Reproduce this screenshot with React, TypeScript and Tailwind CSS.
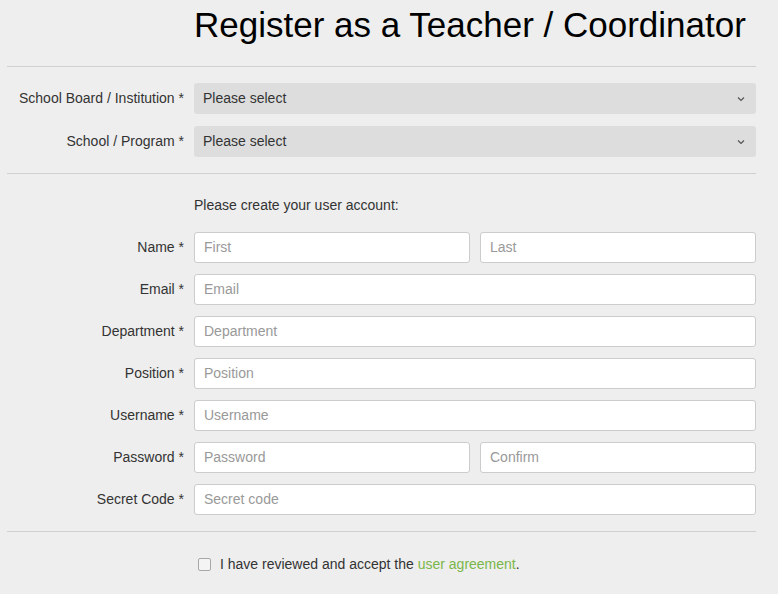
const selects = ["School Board / Institution *", "School / Program *"];

const Chevron = () => (
  <svg
    className="absolute right-[11px] top-1/2 -translate-y-1/2"
    width="8"
    height="5"
    viewBox="0 0 8 5"
    fill="none"
  >
    <path d="M1 1l3 3 3-3" stroke="#555" strokeWidth="1.2" />
  </svg>
);

const TextInput = ({ placeholder }: { placeholder: string }) => (
  <input
    type="text"
    placeholder={placeholder}
    className="h-[31px] w-full min-w-0 rounded-[3px] border border-[#cccccc] bg-white px-[9px] pb-px text-[14px] text-[#333] outline-none placeholder:text-[#999]"
  />
);

const Row = ({ label, children }: { label: string; children: React.ReactNode }) => (
  <div className="flex items-center">
    <label className="w-[177px] shrink-0 text-right text-[14px] text-[#333]">{label}</label>
    <div className="ml-[10px] flex flex-1 gap-[10px]">{children}</div>
  </div>
);

const App = () => {
  return (
    <div
      className="min-h-[594px] w-full bg-[#eeeeee]"
      style={{ fontFamily: '"Liberation Sans", Arial, sans-serif' }}
    >
      <div className="ml-[7px] w-[749px]">
        <h1 className="h-[66px] pl-[187px] pt-[7px] text-[35px] leading-[35px] text-black">
          Register as a Teacher / Coordinator
        </h1>
        <div className="h-px bg-[#d0d0d0]"></div>

        <div className="flex flex-col gap-[12px] py-[16px]">
          {selects.map((label) => (
            <Row key={label} label={label}>
              <div className="relative w-full">
                <div className="flex h-[31px] items-center rounded-[3px] bg-[#dddddd] px-[9px] text-[14px] text-[#333]">
                  Please select
                </div>
                <Chevron />
              </div>
            </Row>
          ))}
        </div>
        <div className="h-px bg-[#d0d0d0]"></div>

        <p className="ml-[187px] mt-[21px] text-[14px] leading-[20px] text-[#333]">
          Please create your user account:
        </p>

        <div className="mt-[17px] flex flex-col gap-[11px] pb-[16px]">
          <Row label="Name *">
            <TextInput placeholder="First" />
            <TextInput placeholder="Last" />
          </Row>
          <Row label="Email *">
            <TextInput placeholder="Email" />
          </Row>
          <Row label="Department *">
            <TextInput placeholder="Department" />
          </Row>
          <Row label="Position *">
            <TextInput placeholder="Position" />
          </Row>
          <Row label="Username *">
            <TextInput placeholder="Username" />
          </Row>
          <Row label="Password *">
            <TextInput placeholder="Password" />
            <TextInput placeholder="Confirm" />
          </Row>
          <Row label="Secret Code *">
            <TextInput placeholder="Secret code" />
          </Row>
        </div>
        <div className="h-px bg-[#d0d0d0]"></div>

        <label className="ml-[191px] mt-[22px] flex items-center text-[14px] leading-[20px] text-[#333]">
          <span className="h-[13px] w-[13px] rounded-[2px] border border-[#a8a8a8] bg-[#f4f4f4]"></span>
          <span className="ml-[9px]">
            I have reviewed and accept the{" "}
            <a className="text-[#7ab648]">user agreement</a>.
          </span>
        </label>
      </div>
    </div>
  );
};

export default App;
